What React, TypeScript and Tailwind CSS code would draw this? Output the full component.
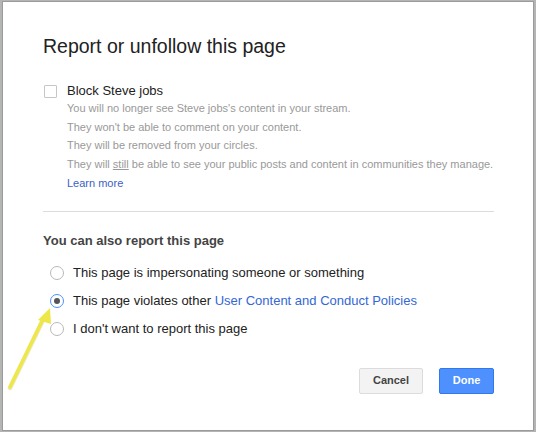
import { type FC } from 'react';

const GRAY_LINES = [
  "You will no longer see Steve jobs's content in your stream.",
  "They won't be able to comment on your content.",
  'They will be removed from your circles.',
];

const REPORT_OPTIONS = [
  { id: 'impersonating', label: 'This page is impersonating someone or something' },
  { id: 'violates', label: 'This page violates other ', link: 'User Content and Conduct Policies' },
  { id: 'none', label: "I don't want to report this page" },
];

/** Radio circle, filled when selected */
const Radio: FC<{ checked: boolean }> = ({ checked }) => (
  <span
    className={`flex h-[14px] w-[14px] shrink-0 items-center justify-center rounded-full border bg-white ${
      checked ? 'border-[#4d90fe]' : 'border-[#b9b9b9]'
    }`}
  >
    {checked && <span className="h-[6px] w-[6px] rounded-full bg-[#555]" />}
  </span>
);

/** Yellow annotation arrow pointing at the selected option */
const Arrow: FC = () => (
  <svg className="pointer-events-none absolute left-0 top-0" width="536" height="432" viewBox="0 0 536 432">
    <line x1="10" y1="388" x2="44" y2="318" stroke="#c9c23a" strokeWidth="4.5" strokeLinecap="round" opacity="0.35" />
    <line x1="10" y1="387" x2="44" y2="317" stroke="#ede74a" strokeWidth="3.5" strokeLinecap="round" />
    <polygon points="50,308 38,320 51,324" fill="#ede74a" />
  </svg>
);

export default function App() {
  return (
    <div
      className="relative h-[432px] w-[536px] overflow-hidden bg-[#b3b6b3] pl-[2px] pt-[1px]"
      style={{ fontFamily: '"Liberation Sans", Arial, sans-serif' }}
    >
      <div className="flex h-[430px] w-[532px] flex-col border border-[#9a9a9a] bg-white pl-[40px] pr-[39px] pt-[32px]">
        <h1 className="text-[19.5px] leading-[24px] text-[#222]">Report or unfollow this page</h1>

        <div className="mt-[25px] flex items-center">
          <span className="ml-[1px] h-[13px] w-[13px] rounded-[1px] border border-[#c6c6c6] bg-white" />
          <span className="ml-[10px] text-[13px] leading-[16px] text-[#222]">Block Steve jobs</span>
        </div>

        <div className="pl-[24px] text-[11px] leading-[18.7px] text-[#999]">
          {GRAY_LINES.map((line) => (
            <div key={line}>{line}</div>
          ))}
          <div>
            They will <span className="underline">still</span> be able to see your public posts and content in
            communities they manage.
          </div>
          <div className="text-[#3b5fc7]">Learn more</div>
        </div>

        <div className="mt-[18px] h-px bg-[#dcdcdc]" />

        <div className="mt-[21px] text-[13px] font-bold leading-[16px] text-[#444]">You can also report this page</div>

        <div className="mt-[16px] flex flex-col gap-[12px] pl-[7px]">
          {REPORT_OPTIONS.map((opt) => (
            <div key={opt.id} className="flex h-[16px] items-center">
              <Radio checked={opt.id === 'violates'} />
              <span className="ml-[9px] text-[13px] leading-[16px] text-[#222]">
                {opt.label}
                {opt.link && <span className="text-[#3367d6]">{opt.link}</span>}
              </span>
            </div>
          ))}
        </div>

        <div className="mt-[31px] flex justify-end gap-[16px]">
          <button className="h-[26px] w-[64px] rounded-[2px] border border-[#dcdcdc] bg-[#f3f3f3] text-[11px] font-bold text-[#444]">
            Cancel
          </button>
          <button className="h-[26px] w-[55px] rounded-[2px] border border-[#3079ed] bg-[#4d90fe] text-[11px] font-bold text-white">
            Done
          </button>
        </div>
      </div>
      <Arrow />
    </div>
  );
}
